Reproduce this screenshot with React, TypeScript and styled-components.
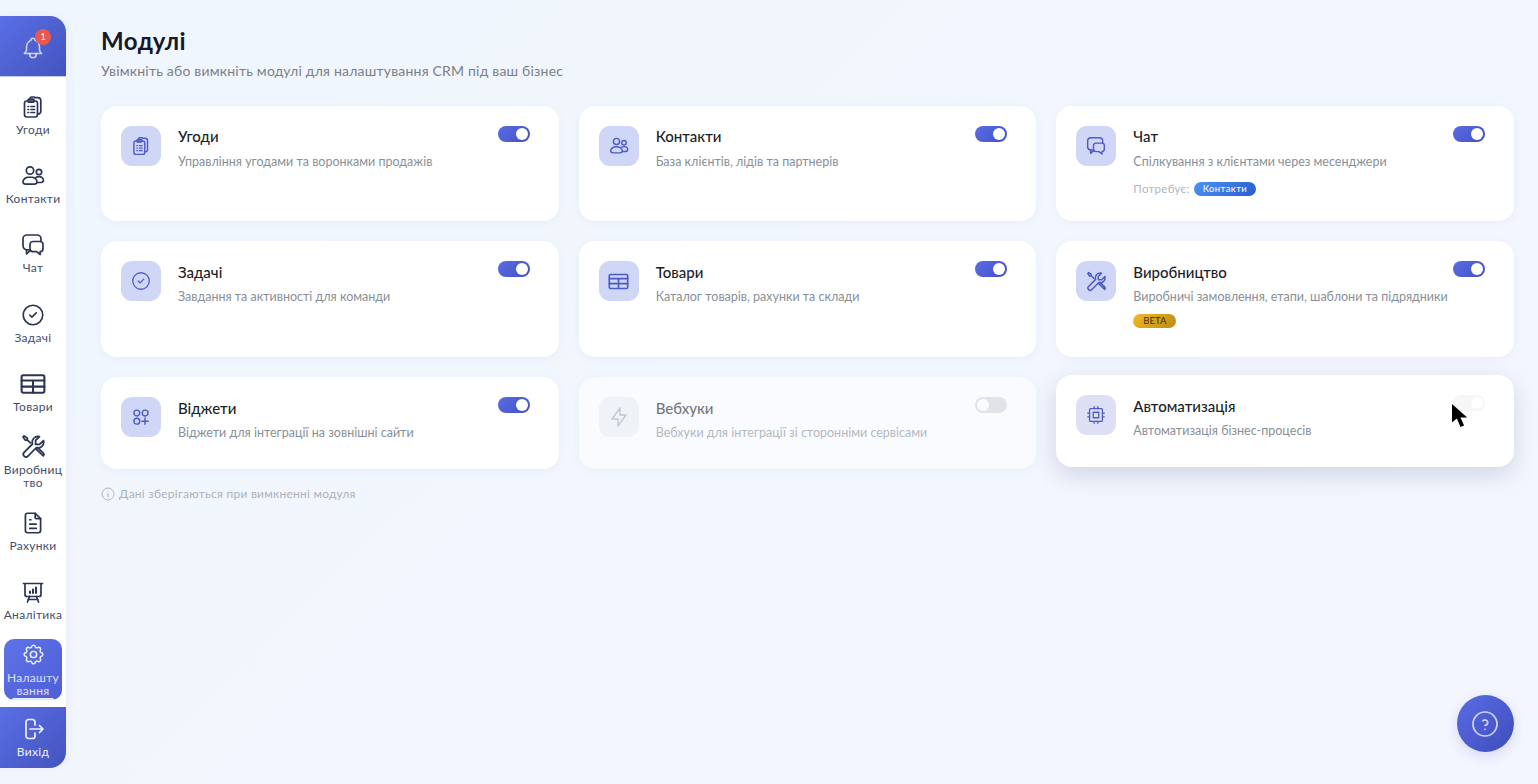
import React from "react";
import styled, { createGlobalStyle } from "styled-components";
import { TbBell, TbCircleCheck, TbFileText, TbSettings, TbBolt, TbCpu, TbInfoCircle, TbHelpCircle } from "react-icons/tb";

const Global = createGlobalStyle`
  html, body { margin: 0; height: 100%; overflow: hidden; }
  body { font-family: Lato, "Open Sans", "Noto Sans", sans-serif; background: linear-gradient(135deg, #f0f6fd 0%, #f4f6ff 100%); }
  #root { height: 100%; }
  * { box-sizing: border-box; }
`;

const Shell = styled.div`display: flex; height: 784px; width: 1538px; position: relative;`;

const Sidebar = styled.aside`
  width: 66px; margin: 16px 0; flex-shrink: 0; background: #fff;
  display: flex; flex-direction: column;
  border-radius: 0 16px 16px 0;
  box-shadow: 2px 0 8px rgba(80, 100, 180, 0.06);
`;
const NotifyBox = styled.div`
  height: 61px; flex-shrink: 0; display: flex; align-items: center; justify-content: center;
  background: linear-gradient(135deg, #5a6fe6, #4453bd);
  border-radius: 0 16px 0 0; border-bottom: 1px solid #c4cbe8;
`;
const BellWrap = styled.div`position: relative; width: 26px; height: 26px; margin-top: 3px; color: rgba(255,255,255,.72);`;
const Badge = styled.span`
  position: absolute; top: -6px; right: -5px; width: 16px; height: 16px; border-radius: 50%;
  background: #e8584c; color: #fff; font-size: 9px; line-height: 16px; text-align: center;
`;
const Nav = styled.nav`flex: 1; min-height: 0; display: flex; flex-direction: column; padding: 3px 0;`;
const NavCell = styled.div`flex: 1; padding: 4px; min-height: 0;`;
const NavLink = styled.a<{ $active?: boolean }>`
  position: relative; height: 100%; display: flex; flex-direction: column; align-items: center; justify-content: center;
  border-radius: 10px; text-align: center;
  color: ${p => (p.$active ? "#eef1ff" : "#2b3454")};
  background: ${p => (p.$active ? "linear-gradient(135deg, #5f72e8, #4e5fd6)" : "transparent")};
  ${p => p.$active && `&::after { content: ""; position: absolute; left: 8px; right: 8px; bottom: -1px; height: 3px; border-radius: 2px; background: rgba(244,245,250,.92); }`}
`;
const NavIcon = styled.span`height: 24px; margin-top: 1px; display: flex; align-items: center; justify-content: center;`;
const NavLabel = styled.span`font-size: 12px; line-height: 13px; margin-top: 4px; color: inherit; opacity: .88; letter-spacing: .3px; width: 60px; margin-left: -1px; margin-right: -1px;`;
const LogoutBox = styled.a`
  height: 61px; flex-shrink: 0; display: flex; flex-direction: column; align-items: center; justify-content: center;
  background: linear-gradient(135deg, #5a6fe6, #4453bd); color: #eef1ff; border-radius: 0 0 16px 0;
`;
const LogoutLabel = styled.span`font-size: 12px; line-height: 13px; margin-top: 4px; letter-spacing: .3px;`;

const Main = styled.main`flex: 1; padding: 25px 24px 0 35px; min-width: 0;`;
const Title = styled.h1`margin: 0; font-size: 24px; line-height: 32px; font-weight: 700; color: #16182a; letter-spacing: .5px;`;
const Subtitle = styled.p`margin: 4px 0 24.67px; font-size: 14px; line-height: 20px; color: #7a8088; letter-spacing: .2px;`;
const Grid = styled.div`display: grid; grid-template-columns: repeat(3, minmax(0, 1fr)); gap: 20px;`;
const Card = styled.div<{ $muted?: boolean; $hover?: boolean }>`
  display: flex; align-items: flex-start; gap: 17px; padding: 20px 29px 20px 20px; background: #fff; border-radius: 16px;
  box-shadow: ${p => (p.$hover ? "0 8px 24px rgba(70, 80, 130, 0.2)" : "0 2px 8px rgba(90, 110, 180, 0.06)")};
  opacity: ${p => (p.$muted ? 0.6 : 1)};
  transform: ${p => (p.$hover ? "translateY(-2px)" : "none")};
`;
const IconBox = styled.div<{ $muted?: boolean; $hover?: boolean }>`
  width: 40px; height: 40px; flex-shrink: 0; border-radius: 11px; display: flex; align-items: center; justify-content: center;
  background: ${p => (p.$muted ? "#eef0f4" : p.$hover ? "#dde0f4" : "#cfd6f6")};
  color: ${p => (p.$muted ? "#a2a6ae" : "#4e5ac6")};
`;
const TextBlock = styled.div`flex: 1; min-width: 0; padding-bottom: 6px;`;
const CardTitle = styled.div`font-size: 15px; line-height: 22px; font-weight: 500; color: #1c1e28; margin-top: -0.4px;`;
const Desc = styled.div`font-size: 12.5px; line-height: 20px; margin-top: 4.4px; color: #8a8f97; white-space: nowrap;`;
const Extra = styled.div`height: 23.67px; display: flex; align-items: flex-start;`;
const Requires = styled.div`margin-top: 10px; height: 14px; display: flex; align-items: center; gap: 4px; font-size: 11.5px; color: #b2b6bc; letter-spacing: .3px;`;
const ReqPill = styled.span`
  height: 14px; padding: 0 9px; border-radius: 7px; color: #fff; font-size: 9.5px; line-height: 14px; letter-spacing: .4px;
  background: linear-gradient(135deg, #4c94f2, #2a5cd0);
`;
const Beta = styled.span`
  margin-top: 7px; height: 14px; width: 43px; text-align: center; border-radius: 7px; color: #3a2c05; font-size: 9.5px; line-height: 14px;
  background: linear-gradient(135deg, #f2bb22, #bd8a12);
`;
const Toggle = styled.div<{ $on?: boolean; $ghost?: boolean }>`
  width: 32px; height: 16px; flex-shrink: 0; border-radius: 8px; padding: 2px; display: flex;
  justify-content: ${p => (p.$on || p.$ghost ? "flex-end" : "flex-start")};
  background: ${p => (p.$on ? "linear-gradient(135deg, #5a6ce6, #4350c0)" : p.$ghost ? "#f6f6f7" : "#d6d7db")};
  &::after { content: ""; width: 12px; height: 12px; border-radius: 50%; background: #fff; }
`;
const Note = styled.div`margin-top: 17px; display: flex; align-items: center; gap: 3px; margin-left: -1px; font-size: 12px; line-height: 16px; color: #adb2ba; letter-spacing: .25px;`;
const Fab = styled.button`
  position: absolute; left: 1456.5px; top: 695px; width: 57px; height: 57px; border: 0; padding: 0; border-radius: 50%;
  display: flex; align-items: center; justify-content: center; color: rgba(255,255,255,.72);
  background: linear-gradient(135deg, #5a6be4, #3f4dbb); box-shadow: 0 4px 14px rgba(70, 85, 200, .18);
`;
const Cursor = styled.svg`position: absolute; left: 1451px; top: 403px; width: 17px; height: 25px;`;

type IP = { size?: number; stroke?: number };
const Base: React.FC<IP & { children: React.ReactNode }> = ({ size = 24, stroke = 1.7, children }) => (
  <svg width={size} height={size} viewBox="0 0 24 24" fill="none" stroke="currentColor" strokeWidth={stroke} strokeLinecap="round" strokeLinejoin="round">{children}</svg>
);
const Deals = (p: IP) => <Base {...p}>
  <rect x="3.5" y="6" width="13" height="16" rx="2.2" />
  <path d="M7 6.2V5.2a1 1 0 0 1 1-1h4a1 1 0 0 1 1 1v1a1 1 0 0 1-1 1H8a1 1 0 0 1-1-1Z" />
  <path d="M9 4V3.6a1.6 1.6 0 0 1 1.6-1.6h2.2a1 1 0 0 1 1 .6h3a3 3 0 0 1 3 3v11a2.4 2.4 0 0 1-3.2 2.2" />
  <path d="M7 11.5h.6M10 11.5h3.5M7 14.5h.6M10 14.5h3.5M7 17.5h.6M10 17.5h3.5" />
</Base>;
const Contacts = (p: IP) => <Base {...p}>
  <circle cx="9" cy="6.5" r="3.7" /><circle cx="18" cy="8" r="2.7" />
  <path d="M9 12.8c-3.8 0-7 2.3-7 5 0 1.7 1.4 2.4 3 2.4h8c1.6 0 3-.7 3-2.4 0-2.7-3.2-5-7-5Z" />
  <path d="M15 13.3c.9-.4 1.9-.6 3-.6 2.4 0 4.4 1.5 4.4 3.6 0 1.4-1 2.2-2.4 2.2h-3.6" />
</Base>;
const Chat = (p: IP) => <Base {...p}>
  <path d="M8 16.8H6a4 4 0 0 1-4-4V6a4 4 0 0 1 4-4h10a4 4 0 0 1 4 4v2.2" />
  <path d="M5.5 16.8v4l3.6-3" />
  <path d="M12 8.5h7a3 3 0 0 1 3 3v4.2a3 3 0 0 1-2.8 3v2.8l-3.6-2.8H12a3 3 0 0 1-3-3v-4.2a3 3 0 0 1 3-3Z" />
</Base>;
const TableIcon = (p: IP) => <Base stroke={1.9} {...p}>
  <rect x="1.5" y="4" width="21" height="16" rx="1.5" />
  <path d="M1.5 8.8h21M1.5 14.4h21M12 8.8V20" />
</Base>;
const Tools = (p: IP) => <Base {...p}>
  <path d="M21.6 6.4a5.6 5.6 0 0 1-7 6.8l-7.9 8a2.5 2.5 0 0 1-3.7-3.6l8-8a5.6 5.6 0 0 1 6.7-7.1L14 6.2V10h3.8Z" />
  <path d="M9 8.5 6.3 5.8H4L2 2.8l1-1 3 2v2.2" />
  <path d="m14.5 14.5 6.9 6.5a1.9 1.9 0 0 0 .1-2.6l-5.6-5.4" />
</Base>;
const Board = (p: IP) => <Base {...p}>
  <path d="M2.5 3.5h19M4 3.5v11a2 2 0 0 0 2 2h12a2 2 0 0 0 2-2v-11" />
  <path d="M8.5 16.5 6.5 22M15.5 16.5l2 5.5M7 19.5h10" />
  <path d="M9 13v-1.5M12 13v-3.5M15 13V7.5" strokeWidth={2} />
</Base>;
const Widgets = (p: IP) => <Base {...p}>
  <circle cx="7" cy="7.2" r="3.5" /><circle cx="17" cy="7.2" r="3.5" /><circle cx="7" cy="17" r="3.5" />
  <path d="M13 17h7.6M16.8 13.2v7.6" />
</Base>;
const Logout = (p: IP) => <Base {...p}>
  <path d="M14 8V5a2.5 2.5 0 0 0-2.5-2.5H7.5A2.5 2.5 0 0 0 5 5v14a2.5 2.5 0 0 0 2.5 2.5h4A2.5 2.5 0 0 0 14 19v-3" />
  <path d="M9 12h13M18.5 8.5 22 12l-3.5 3.5" />
</Base>;

const nav = [
  { label: ["Угоди"], icon: <Deals /> },
  { label: ["Контакти"], icon: <Contacts /> },
  { label: ["Чат"], icon: <Chat /> },
  { label: ["Задачі"], icon: <TbCircleCheck size={26} strokeWidth={1.5} /> },
  { label: ["Товари"], icon: <TableIcon size={26} /> },
  { label: ["Виробниц", "тво"], icon: <Tools size={25} /> },
  { label: ["Рахунки"], icon: <TbFileText size={26} strokeWidth={1.6} /> },
  { label: ["Аналітика"], icon: <Board /> },
  { label: ["Налашту", "вання"], icon: <TbSettings size={25} strokeWidth={1.4} />, active: true },
];

type M = { title: string; desc: string; icon: React.ReactNode; on?: boolean; muted?: boolean; hover?: boolean; req?: string; beta?: boolean };
const modules: M[] = [
  { title: "Угоди", desc: "Управління угодами та воронками продажів", icon: <Deals size={20} />, on: true },
  { title: "Контакти", desc: "База клієнтів, лідів та партнерів", icon: <Contacts size={20} />, on: true },
  { title: "Чат", desc: "Спілкування з клієнтами через месенджери", icon: <Chat size={20} />, on: true, req: "Контакти" },
  { title: "Задачі", desc: "Завдання та активності для команди", icon: <TbCircleCheck size={22} strokeWidth={1.4} />, on: true },
  { title: "Товари", desc: "Каталог товарів, рахунки та склади", icon: <TableIcon size={21} />, on: true },
  { title: "Виробництво", desc: "Виробничі замовлення, етапи, шаблони та підрядники", icon: <Tools size={21} />, on: true, beta: true },
  { title: "Віджети", desc: "Віджети для інтеграції на зовнішні сайти", icon: <Widgets size={20} />, on: true },
  { title: "Вебхуки", desc: "Вебхуки для інтеграції зі сторонніми сервісами", icon: <TbBolt size={24} strokeWidth={1.3} />, muted: true },
  { title: "Автоматизація", desc: "Автоматизація бізнес-процесів", icon: <TbCpu size={22} strokeWidth={1.4} />, hover: true },
];

export default function App() {
  return (
    <Shell>
      <Global />
      <Sidebar>
        <NotifyBox>
          <BellWrap><TbBell size={26} strokeWidth={1.4} /><Badge>1</Badge></BellWrap>
        </NotifyBox>
        <Nav>
          {nav.map(n => (
            <NavCell key={n.label.join("")}>
              <NavLink $active={n.active}>
                <NavIcon>{n.icon}</NavIcon>
                <NavLabel>{n.label.map((part, i) => <React.Fragment key={part}>{i > 0 && <wbr />}{part}</React.Fragment>)}</NavLabel>
              </NavLink>
            </NavCell>
          ))}
        </Nav>
        <LogoutBox><Logout /><LogoutLabel>Вихід</LogoutLabel></LogoutBox>
      </Sidebar>
      <Main>
        <Title>Модулі</Title>
        <Subtitle>Увімкніть або вимкніть модулі для налаштування CRM під ваш бізнес</Subtitle>
        <Grid>
          {modules.map(m => (
            <Card key={m.title} $muted={m.muted} $hover={m.hover}>
              <IconBox $muted={m.muted} $hover={m.hover}>{m.icon}</IconBox>
              <TextBlock>
                <CardTitle>{m.title}</CardTitle>
                <Desc>{m.desc}</Desc>
                {m.req && <Extra><Requires>Потребує:<ReqPill>{m.req}</ReqPill></Requires></Extra>}
                {m.beta && <Extra><Beta>BETA</Beta></Extra>}
              </TextBlock>
              <Toggle $on={m.on} $ghost={m.hover} />
            </Card>
          ))}
        </Grid>
        <Note><TbInfoCircle size={16} strokeWidth={1.4} />Дані зберігаються при вимкненні модуля</Note>
      </Main>
      <Fab aria-label="Допомога"><TbHelpCircle size={32} strokeWidth={1.3} /></Fab>
      <Cursor viewBox="0 0 17 25"><path d="M1 1v18.5l4.8-4 3.7 8.5 3.6-1.6-3.6-8h6.7Z" fill="#000" /></Cursor>
    </Shell>
  );
}
